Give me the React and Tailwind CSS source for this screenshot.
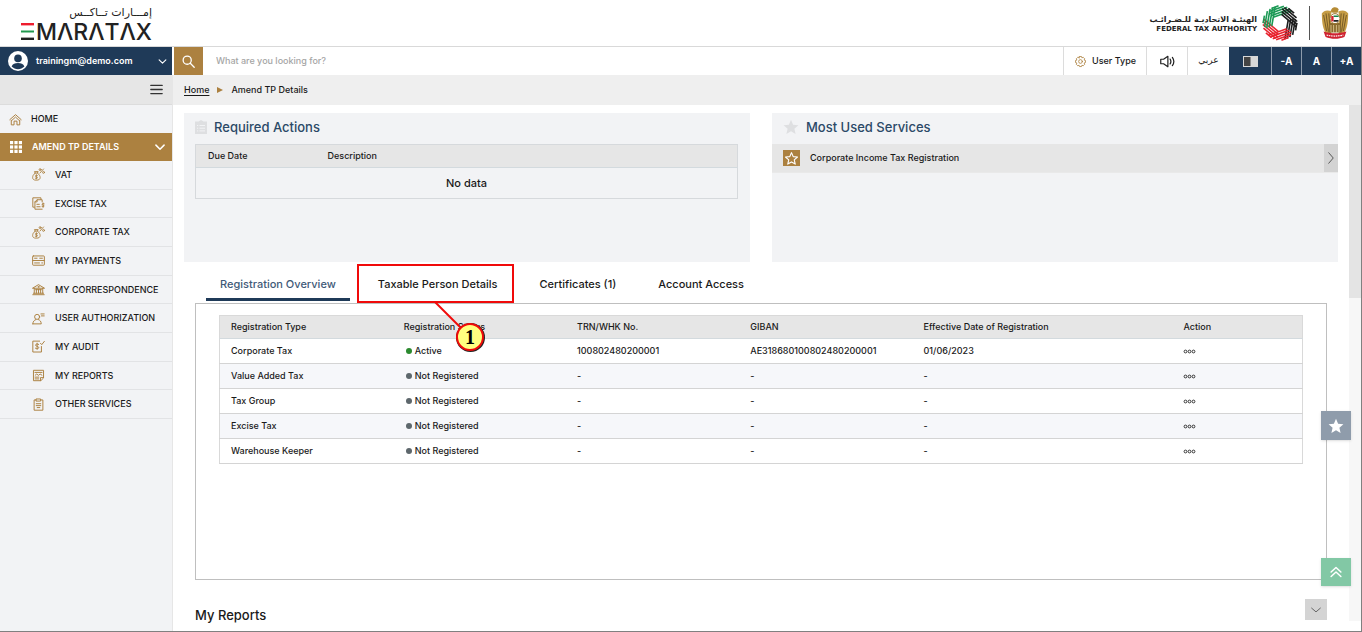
import React from "react";

const G = "#ac8140";

function Glyph({ children, size = 13, color = G, width = 1.2, label }) {
  return (
    <svg
      width={size}
      height={size}
      viewBox="0 0 16 16"
      fill="none"
      stroke={color}
      strokeWidth={width}
      strokeLinecap="round"
      strokeLinejoin="round"
      className="shrink-0"
      aria-hidden={label ? undefined : true}
      aria-label={label}
    >
      {children}
    </svg>
  );
}

const STAR = "M8 .8l2.1 4.9 5.3.5-4 3.5 1.2 5.2L8 12.2l-4.6 2.7 1.2-5.2-4-3.5 5.3-.5z";

const HomeIcon = () => (
  <Glyph>
    <path d="M1 8.2L8 2l7 6.2M2.8 9v5.6h3.4V10h3.6v4.6h3.4V9" />
    <path d="M3.4 9.2L8 5l4.6 4.2" />
  </Glyph>
);
const MoneyBag = () => (
  <Glyph width={1.1}>
    <path d="M4 6.2L3 4.4h4.6l-1 1.8M3.6 6.2h3.6M3.6 6.6C1.6 8 .8 9.8.8 11.8c0 2 1.2 3.2 4.5 3.2s4.7-1.2 4.7-3.2c0-2-1-3.8-2.9-5.2" />
    <path d="M6.7 9.3c-1.5-.8-2.8 0-2.5.9.3.9 2.4.6 2.5 1.7.1 1-1.5 1.3-2.7.6M5.4 8.3v5.2M9.8 6.2l4.4-5" />
    <circle cx="10" cy="2" r="1.2" />
    <circle cx="14.2" cy="5.4" r="1.2" />
  </Glyph>
);
const ExciseIcon = () => (
  <Glyph>
    <path d="M3 12.5H1V1h10v2M12.5 6V3.4H6.2L3.6 6v9h8.9M6.3 3.6V6H3.8M6 9h3M6 12h4" />
    <path d="M15 8.3c-1.4-.7-2.7-.1-2.5.9.2 1 2.4.7 2.4 1.8 0 1-1.4 1.2-2.6.6M13.6 7.4v5.2" />
  </Glyph>
);
const CardIcon = () => (
  <Glyph>
    <rect x=".8" y="2.4" width="14.4" height="11.4" rx=".8" />
    <path d="M1 8h14M3.2 5.2h3M9.5 5.2h3.3M3.2 11h6M12 11h1" />
  </Glyph>
);
const BankIcon = () => (
  <Glyph>
    <path d="M1 6.2L8 2l7 4.2zM2.8 6.5v6M13.2 6.5v6M5.4 8v4.4M8 8v4.4M10.6 8v4.4M4.4 8.2h7.2M1 14.4h14M1.8 12.6h12.4" />
    <circle cx="8" cy="4.7" r=".6" />
  </Glyph>
);
const UserIcon = () => (
  <Glyph>
    <circle cx="6.3" cy="6" r="3.1" />
    <path d="M1 14.6c.2-3 1.6-4.5 3.6-5.2M8 9.4c2 .7 3.2 2.2 3.4 5.2H1M11 2.4h4M11.6 4.8H15" />
  </Glyph>
);
const AuditIcon = () => (
  <Glyph>
    <path d="M9.4 1.4H1v13.4h10.6V8" />
    <path d="M8.2 5.4C6.2 4.4 4.2 5 4.4 6.5c.2 1.4 3.8 1 3.9 2.8.1 1.4-2.3 1.9-4.1.8M6.3 3.9v7.6M10.4 4l1.6 1.7 3.2-4" />
  </Glyph>
);
const ReportIcon = () => (
  <Glyph>
    <path d="M14.2 10.6V1.6H1.8v12.8h8.6zM10.4 14.2v-3.6h3.6M3.6 4.2h8.8M4 7.6l1.8-1.4L8 7.8l2-1.6 2.2 1.4M3.8 10h4.6M3.8 12.2h4.4" />
  </Glyph>
);
const ClipIcon = () => (
  <Glyph>
    <path d="M5 2.4H2.6V15h10.8V2.4H11M5.4 1.2h5.2v2.6H5.4zM5.2 7h5.6M5.2 9.4h5.6M6.4 11.8h3.2" />
  </Glyph>
);
const Grid9 = () => (
  <svg width="12" height="12" viewBox="0 0 12 12" fill="#fff" className="shrink-0" aria-hidden="true">
    {[0, 4.4, 8.8].map((y) => [0, 4.4, 8.8].map((x) => <rect key={x + "-" + y} x={x} y={y} width="3.2" height="3.2" />))}
  </svg>
);

const NAV = [
  ["VAT", MoneyBag],
  ["EXCISE TAX", ExciseIcon],
  ["CORPORATE TAX", MoneyBag],
  ["MY PAYMENTS", CardIcon],
  ["MY CORRESPONDENCE", BankIcon],
  ["USER AUTHORIZATION", UserIcon],
  ["MY AUDIT", AuditIcon],
  ["MY REPORTS", ReportIcon],
  ["OTHER SERVICES", ClipIcon],
];

const ROWS = [
  ["Corporate Tax", "Active", "100802480200001", "AE318680100802480200001", "01/06/2023"],
  ["Value Added Tax", "Not Registered", "-", "-", "-"],
  ["Tax Group", "Not Registered", "-", "-", "-"],
  ["Excise Tax", "Not Registered", "-", "-", "-"],
  ["Warehouse Keeper", "Not Registered", "-", "-", "-"],
];

function AuthorityEmblem() {
  const colors = ["#1c9a55", "#1d1d1d", "#1d1d1d", "#e8242f", "#e8242f", "#1c9a55"];
  return (
    <svg width="36" height="36" viewBox="-18 -18 36 36" aria-label="Federal Tax Authority emblem">
      {colors.map((c, i) => (
        <g key={i} transform={`rotate(${i * 60 - 20})`} stroke={c} strokeWidth="1.6">
          <path d="M-4.4 -7.6L15 -7.6M-6 -9.9L14 -9.9M-7.4 -12.2L12.200 -12.2M-6.5 -14.5L9.400 -14.5M-3 -16.6L4.500 -16.6" />
        </g>
      ))}
    </svg>
  );
}

function StateEmblem() {
  return (
    <svg width="28" height="34" viewBox="0 0 28 34" aria-label="State emblem">
      <path d="M10.5 3.2C12 .6 16.6.6 17.6 3.6l-1 3.2h-4.8L9.4 5.4z" fill="#b58b35" />
      <path d="M10.8 5.6C6.6 3.6 3 4.4.8 7.4c.2 7 .4 13 3.6 19l5.800 1.4V8zM17.2 5.6c4.2-2 7.8-1.2 10 1.8-.2 7-.4 13-3.6 19l-5.800 1.4V8z" fill="#c59c45" />
      <path d="M2.6 9l3 16M5 7.4l2.400 18M7.8 7.4l1.4 17M25.4 9l-3 16M23 7.4l-2.400 18M20.2 7.4l-1.4 17" stroke="#6d5423" strokeWidth=".9" fill="none" />
      <path d="M8.6 17h10.8l1.4 9.6H7.2z" fill="#8a6b2e" />
      <path d="M10 19v7M12.6 19v8M15.4 19v8M18 19v7" stroke="#e4cf98" strokeWidth=".8" />
      <circle cx="14" cy="12.6" r="5" fill="#fff" stroke="#9a7730" strokeWidth="1" />
      <path d="M10.2 10h2.4v5.4h-2.4z" fill="#d8232f" />
      <path d="M12.600 9.400h4.400l1 1.700h-5.400z" fill="#14864a" />
      <path d="M12.600 14h5.200l-1 1.700h-4.200z" fill="#222" />
      <path d="M2.600 25.400c7.400 2.4 15.400 2.4 22.800 0l-2 5.6c-5.800 2.400-13 2.400-18.800 0z" fill="#cf2230" />
      <path d="M5.600 29c5.400 1.4 11.400 1.4 16.800 0" stroke="#fff" strokeWidth="1.2" strokeDasharray="1.6 .7" fill="none" />
    </svg>
  );
}

function Header() {
  return (
    <header className="flex h-[47px] items-center justify-between border-b border-[#d9d9d9] bg-white pl-[21px] pr-3">
      <div className="flex flex-col items-end pt-[2px] text-[#222]">
        <span dir="rtl" lang="ar" className="font-['DejaVu_Sans'] text-[11px] leading-[15px]">إمـــارات تــاكــس</span>
        <div className="flex items-center gap-[2px]">
          <svg width="13" height="17" viewBox="0 0 13 17" aria-hidden="true">
            <path d="M0 1.2h13" stroke="#ee1c2e" strokeWidth="2.4" />
            <path d="M0 8.5h13" stroke="#22994f" strokeWidth="2" />
            <path d="M0 15.8h13" stroke="#222" strokeWidth="2.4" />
          </svg>
          <span className="text-[23px] font-medium leading-[24px]">MΛRΛTΛX</span>
        </div>
      </div>
      <div className="flex items-center">
        <div className="flex flex-col items-end pr-[5px] text-[#222]">
          <span dir="rtl" lang="ar" className="font-['DejaVu_Sans'] text-[8px] font-bold leading-[11px]">الهيئـة الاتحاديـة للـضـرائـب</span>
          <span className="font-['DejaVu_Sans'] text-[7px] font-bold leading-[8px]">FEDERAL TAX AUTHORITY</span>
        </div>
        <AuthorityEmblem />
        <div className="mx-[11px] h-[34px] w-px bg-[#555]" />
        <StateEmblem />
      </div>
    </header>
  );
}

function Toolbar() {
  const cell = "flex h-full items-center justify-center border-l border-[#dcdcdc]";
  const dark = "flex h-full w-[30px] items-center justify-center border-l border-[#8d9bab] text-[10px] font-bold text-white";
  return (
    <div className="flex h-[28px] bg-white">
      <button className="flex w-[172px] shrink-0 items-center bg-[#1f3a58] pl-[8px] pr-[5px] text-white">
        <svg width="20" height="20" viewBox="0 0 20 20" aria-hidden="true">
          <circle cx="10" cy="10" r="10" fill="#fff" />
          <circle cx="10" cy="7.4" r="3.8" fill="#1f3a58" />
          <path d="M3.6 15.6c1-2.8 3.4-3.6 6.4-3.6s5.400.8 6.400 3.600c-3.400 3.400-9.400 3.400-12.800 0z" fill="#1f3a58" />
        </svg>
        <span className="flex-1 pl-[8px] text-left text-[9px] font-semibold">trainingm@demo.com</span>
        <Glyph size={9} color="#fff" width={2}><path d="M2 5l6 6 6-6" /></Glyph>
      </button>
      <button aria-label="Search" className="ml-[2px] flex w-[29px] shrink-0 items-center justify-center bg-[#ac8140]">
        <Glyph size={13} color="#fff" width={1.6}><circle cx="6.400" cy="6.400" r="5" /><path d="M10.200 10.200L15 15" /></Glyph>
      </button>
      <input
        aria-label="Search services"
        placeholder="What are you looking for?"
        className="min-w-0 flex-1 px-[13px] text-[9px] font-medium outline-none placeholder:text-[#a5a5a5]"
      />
      <button className={cell + " w-[83px] gap-[5px] text-[9px] font-medium"}>
        <Glyph size={13} width={1}>
          <path d="M6.700 1h2.600l.5 1.700 1.500-.8 1.900 1.900-.8 1.500 1.700.5v2.600l-1.700.6.8 1.500-1.900 1.900-1.500-.8-.5 1.700H6.700l-.5-1.700-1.500.8-1.900-1.900.8-1.500L1.900 8.400V5.800l1.700-.5-.8-1.500 1.900-1.900 1.500.8z" transform="translate(0 .9)" />
          <circle cx="8" cy="8" r="2.300" />
        </Glyph>
        User Type
      </button>
      <button aria-label="Read aloud" className={cell + " w-[41px]"}>
        <Glyph size={15} color="#222" width={1.300}><path d="M.8 5.600v4.800h3l4.600 3.200V2.400L3.800 5.600zM10.800 5.400c1 1.600 1 3.600 0 5.200M13.200 3.600c2 2.800 2 6 0 8.800" /></Glyph>
      </button>
      <button lang="ar" className={cell + " w-[42px] font-['DejaVu_Sans'] text-[9px]"}>عربي</button>
      <button aria-label="Contrast" className="flex h-full w-[42px] items-center justify-center bg-[#1f3a58]">
        <svg width="15" height="11" viewBox="0 0 15 11"><path d="M0 0h15v11H0z" fill="#d8d8d8" /><path d="M1 1h6.500v9H1z" fill="#444" /></svg>
      </button>
      <div className="flex bg-[#1f3a58]">
        <button className={dark}>-A</button>
        <button className={dark}>A</button>
        <button className={dark}>+A</button>
      </div>
    </div>
  );
}

function Sidebar() {
  return (
    <aside className="flex w-[173px] shrink-0 flex-col border-r border-[#e6e6e6] bg-[#f2f3f5] text-[9px] font-medium text-[#1a1a1a]">
      <div className="flex h-[30px] items-center justify-end border-b border-[#dcdcdc] bg-[#e6e6e6] pr-[9px]">
        <button aria-label="Toggle menu">
          <Glyph size={13} color="#333" width={1.600}><path d="M1 3h14M1 8h14M1 13h14" /></Glyph>
        </button>
      </div>
      <nav>
        <a href="#home" className="flex h-[28px] items-center gap-[9px] pl-[9px]"><HomeIcon />HOME</a>
        <a href="#amend" className="flex h-[28px] items-center gap-[10px] bg-[#ac8140] pl-[10px] pr-[7px] font-semibold text-white">
          <Grid9 />
          <span className="flex-1">AMEND TP DETAILS</span>
          <Glyph size={10} color="#fff" width={2.400}><path d="M1.500 5L8 11.500 14.500 5" /></Glyph>
        </a>
        <ul className="grid h-[258px] grid-rows-9">
          {NAV.map(([name, Icon]) => (
            <li key={name} className="border-b border-[#e2e3e5]">
              <a href="#item" className="flex h-full items-center gap-[10px] pl-[32px]"><Icon />{name}</a>
            </li>
          ))}
        </ul>
      </nav>
    </aside>
  );
}

function Panels() {
  const title = "text-[13px] font-medium leading-[20px] text-[#2b4967]";
  return (
    <div className="grid grid-cols-2 gap-[22px]">
      <section className="h-[149px] bg-[#f2f3f5] pl-[11px] pr-[12px] pt-[4px]">
        <div className="flex h-[20px] items-center gap-[7px]">
          <svg width="12" height="14" viewBox="0 0 12 14" aria-hidden="true">
            <path d="M0 1.500h3.500L6 0l2.500 1.500H12V14H0z" fill="#dedfe1" />
            <path d="M2 5.500h1.200M4.500 5.500H10M2 8.200h1.200M4.500 8.200H10M2 10.900h1.200M4.500 10.900H10" stroke="#f2f3f5" />
          </svg>
          <h2 className={title}>Required Actions</h2>
        </div>
        <table className="mt-[7px] w-full border border-[#d6d9dc] text-[9px]">
          <thead>
            <tr className="h-[23px] border-b border-[#d3dade] bg-[#e6e6e6] text-left">
              <th className="w-[120px] pl-[12px] font-medium">Due Date</th>
              <th className="pl-[12px] font-medium">Description</th>
            </tr>
          </thead>
          <tbody>
            <tr className="h-[31px]"><td colSpan={2} className="text-center text-[11px] font-medium">No data</td></tr>
          </tbody>
        </table>
      </section>
      <section className="h-[149px] bg-[#f2f3f5] pt-[4px]">
        <div className="flex h-[20px] items-center gap-[7px] pl-[11px]">
          <svg width="16" height="16" viewBox="0 0 16 16" aria-hidden="true"><path d={STAR} fill="#dedfe1" /></svg>
          <h2 className={title}>Most Used Services</h2>
        </div>
        <a href="#corporate" className="mt-[7px] flex h-[29px] items-center border-b border-[#e9e9e9] bg-[#e6e6e6] pl-[11px] text-[9px]">
          <span className="flex h-[16px] w-[17px] items-center justify-center bg-[#ac8140]">
            <Glyph size={13} color="#fff" width={1.400}><path d={STAR} /></Glyph>
          </span>
          <span className="flex-1 pl-[10px] font-medium">Corporate Income Tax Registration</span>
          <span className="flex h-full w-[14px] items-center justify-center bg-[#d3d3d3]">
            <Glyph size={12} color="#555" width={1.300}><path d="M5 1l6 7-6 7" /></Glyph>
          </span>
        </a>
      </section>
    </div>
  );
}

function Callout() {
  return (
    <span className="pointer-events-none absolute -left-[7px] -right-[3px] inset-y-0 z-10 border-2 border-[#f00a0a]">
      <svg className="absolute left-[74px] top-[36px]" width="60" height="54" viewBox="0 0 60 54" aria-hidden="true">
        <path d="M2 0L28 26" stroke="#f00a0a" strokeWidth="2" />
        <circle cx="37.500" cy="35.500" r="14.500" fill="#222" />
        <circle cx="37" cy="35" r="13" fill="#ffff80" stroke="#f00a0a" strokeWidth="2" />
        <text x="37" y="42" textAnchor="middle" fontFamily="Liberation Serif, serif" fontWeight="700" fontSize="20" fill="#000">1</text>
      </svg>
    </span>
  );
}

function Registration() {
  const tab = "relative h-[39px] px-[14px] pt-[2px] text-[11px] font-medium";
  return (
    <section className="mx-[11px]">
      <div role="tablist" className="flex gap-[14px] pl-[11px] pt-[2px]">
        <button role="tab" aria-selected="true" className={tab + " text-[#3f5a78]"}>
          Registration Overview
          <span className="absolute inset-x-0 bottom-[2px] h-[3px] bg-[#1f3a58]" />
        </button>
        <button role="tab" aria-selected="false" className={tab}>Taxable Person Details<Callout /></button>
        <button role="tab" aria-selected="false" className={tab}>Certificates (1)</button>
        <button role="tab" aria-selected="false" className={tab}>Account Access</button>
      </div>
      <div className="min-h-[277px] border border-[#bfbfbf] px-[23px] pt-[11px]">
        <table className="w-full table-fixed border border-[#d9d9d9] text-left text-[9px] font-medium">
          <colgroup>
            <col className="w-[16%]" /><col className="w-[16%]" /><col className="w-[16%]" /><col className="w-[16%]" /><col className="w-[24%]" /><col className="w-[12%]" />
          </colgroup>
          <thead>
            <tr className="h-[23px] border-b border-[#d3dade] bg-[#e6e6e6]">
              {["Registration Type", "Registration Status", "TRN/WHK No.", "GIBAN", "Effective Date of Registration", "Action"].map((h) => (
                <th key={h} className="pl-[11px] font-medium">{h}</th>
              ))}
            </tr>
          </thead>
          <tbody>
            {ROWS.map((r) => (
              <tr key={r[0]} className="h-[25px] border-b border-[#d4d4d4] even:bg-[#f6f7fa]">
                <td className="pl-[11px]">{r[0]}</td>
                <td className="pl-[13px]">
                  <span className="flex items-center gap-[3px]">
                    <span className={r[1] === "Active" ? "h-[6px] w-[6px] rounded-full bg-[#2b8a2f]" : "h-[6px] w-[6px] rounded-full bg-[#5d676c]"} />
                    {r[1]}
                  </span>
                </td>
                <td className="pl-[11px]">{r[2]}</td>
                <td className="pl-[11px]">{r[3]}</td>
                <td className="pl-[11px]">{r[4]}</td>
                <td className="pl-[11px]">
                  <button aria-label={"Actions for " + r[0]} className="block">
                    <svg width="13" height="5" viewBox="0 0 13 5" fill="none" stroke="#222" strokeWidth=".9"><circle cx="2.500" cy="2.500" r="1.400" /><circle cx="6.500" cy="2.500" r="1.400" /><circle cx="10.500" cy="2.500" r="1.400" /></svg>
                  </button>
                </td>
              </tr>
            ))}
          </tbody>
        </table>
      </div>
    </section>
  );
}

export default function App() {
  return (
    <div className="relative flex min-h-screen flex-col border-b border-r border-[#808080] bg-white font-['Inter',sans-serif] text-[#1a1a1a]">
      <Header />
      <Toolbar />
      <div className="flex flex-1">
        <Sidebar />
        <div className="flex min-w-0 flex-1 flex-col">
          <nav aria-label="Breadcrumb" className="flex h-[30px] items-center gap-[8px] bg-[#efefef] pl-[11px] text-[9px] font-medium">
            <a href="#home" className="underline underline-offset-2">Home</a>
            <svg width="6" height="6" viewBox="0 0 6 6" aria-hidden="true"><path d="M0 0l6 3-6 3z" fill={G} /></svg>
            <span>Amend TP Details</span>
          </nav>
          <div className="flex flex-1">
            <main className="min-w-0 flex-1 pl-[11px] pr-[11px] pt-[8px]">
              <Panels />
              <Registration />
              <div className="ml-[11px] mr-[11px] flex items-start justify-between pt-[19px]">
                <h2 className="pt-[6px] text-[13px] font-medium leading-[20px]">My Reports</h2>
                <button aria-label="Expand reports" className="flex h-[21px] w-[22px] items-center justify-center bg-[#d4d4d4]">
                  <Glyph size={10} color="#666" width={1.600}><path d="M1 5l7 6 7-6" /></Glyph>
                </button>
              </div>
            </main>
            <div className="mb-[10px] w-[12px] bg-[#f7f7f7]"><div className="h-[193px] bg-[#e4e4e4]" /></div>
          </div>
        </div>
      </div>
      <button aria-label="Favourites" className="absolute right-[10px] top-[411px] z-20 flex h-[29px] w-[30px] items-center justify-center bg-[#8f9cab] shadow">
        <svg width="16" height="16" viewBox="0 0 16 16"><path d={STAR} fill="#fff" /></svg>
      </button>
      <button aria-label="Back to top" className="absolute right-[10px] top-[558px] z-20 flex h-[28px] w-[30px] items-center justify-center bg-[#82c8a5] shadow">
        <Glyph size={12} color="#fff" width={2}><path d="M1.500 8L8 2l6.500 6M1.500 14L8 8l6.500 6" /></Glyph>
      </button>
    </div>
  );
}
